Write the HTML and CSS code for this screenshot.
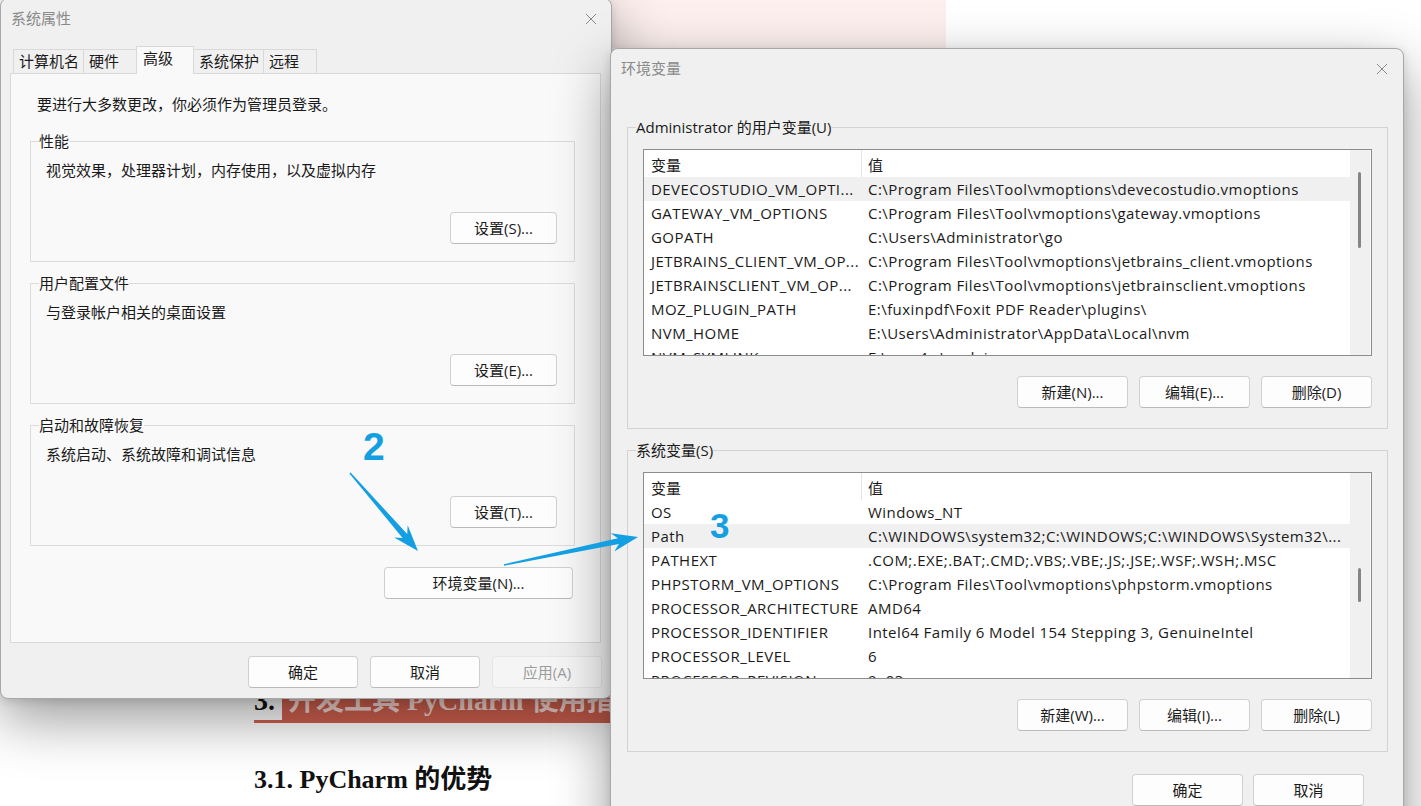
FILE: index.html
```html
<!DOCTYPE html>
<html lang="zh-CN">
<head>
    <meta charset="UTF-8">
    <meta name="viewport" content="width=device-width, initial-scale=1.0">
    <title>环境变量</title>
    <link rel="stylesheet" href="styles.css">
</head>
<body>
<div class="desk">

    <!-- page behind the dialogs -->
    <div class="doc">
        <div class="doc-band"></div>
        <h2 class="doc-h2"><span class="num">3.</span><span class="ttl">开发工具 PyCharm 使用指南</span></h2>
        <h3 class="doc-h3">3.1. PyCharm 的优势</h3>
    </div>

    <!-- 系统属性 dialog -->
    <div class="win sysprops">
        <div class="titlebar">
            <span class="wtitle">系统属性</span>
            <svg class="close" width="12" height="12" viewBox="0 0 12 12"><path d="M1 1L11 11M11 1L1 11"/></svg>
        </div>
        <div class="tabs">
            <span class="tab">计算机名</span>
            <span class="tab">硬件</span>
            <span class="tab on">高级</span>
            <span class="tab">系统保护</span>
            <span class="tab">远程</span>
        </div>
        <div class="panel">
            <p class="note">要进行大多数更改，你必须作为管理员登录。</p>
            <fieldset class="grp">
                <legend>性能</legend>
                <p>视觉效果，处理器计划，内存使用，以及虚拟内存</p>
                <div class="grp-btns"><button class="btn">设置(S)...</button></div>
            </fieldset>
            <fieldset class="grp">
                <legend>用户配置文件</legend>
                <p>与登录帐户相关的桌面设置</p>
                <div class="grp-btns"><button class="btn">设置(E)...</button></div>
            </fieldset>
            <fieldset class="grp">
                <legend>启动和故障恢复</legend>
                <p>系统启动、系统故障和调试信息</p>
                <div class="grp-btns"><button class="btn">设置(T)...</button></div>
            </fieldset>
            <div class="env-row"><button class="btn wide">环境变量(N)...</button></div>
        </div>
        <div class="foot">
            <button class="btn">确定</button>
            <button class="btn">取消</button>
            <button class="btn" disabled>应用(A)</button>
        </div>
    </div>

    <!-- 环境变量 dialog -->
    <div class="win envvars">
        <div class="titlebar">
            <span class="wtitle">环境变量</span>
            <svg class="close" width="12" height="12" viewBox="0 0 12 12"><path d="M1 1L11 11M11 1L1 11"/></svg>
        </div>

        <fieldset class="grp envgrp">
            <legend>Administrator 的用户变量(U)</legend>
            <div class="lv">
                <div class="lv-main">
                    <div class="lv-head"><span class="c1">变量</span><span class="c2">值</span></div>
                    <div class="row sel"><span class="c1">DEVECOSTUDIO_VM_OPTI...</span><span class="c2">C:\Program Files\Tool\vmoptions\devecostudio.vmoptions</span></div>
                    <div class="row"><span class="c1">GATEWAY_VM_OPTIONS</span><span class="c2">C:\Program Files\Tool\vmoptions\gateway.vmoptions</span></div>
                    <div class="row"><span class="c1">GOPATH</span><span class="c2">C:\Users\Administrator\go</span></div>
                    <div class="row"><span class="c1">JETBRAINS_CLIENT_VM_OP...</span><span class="c2">C:\Program Files\Tool\vmoptions\jetbrains_client.vmoptions</span></div>
                    <div class="row"><span class="c1">JETBRAINSCLIENT_VM_OP...</span><span class="c2">C:\Program Files\Tool\vmoptions\jetbrainsclient.vmoptions</span></div>
                    <div class="row"><span class="c1">MOZ_PLUGIN_PATH</span><span class="c2">E:\fuxinpdf\Foxit PDF Reader\plugins\</span></div>
                    <div class="row"><span class="c1">NVM_HOME</span><span class="c2">E:\Users\Administrator\AppData\Local\nvm</span></div>
                    <div class="row"><span class="c1">NVM_SYMLINK</span><span class="c2">E:\nvm4w\nodejs</span></div>
                </div>
                <div class="lv-scroll"><span class="thumb user"></span></div>
            </div>
            <div class="grp-btns">
                <button class="btn">新建(N)...</button>
                <button class="btn">编辑(E)...</button>
                <button class="btn">删除(D)</button>
            </div>
        </fieldset>

        <fieldset class="grp envgrp">
            <legend>系统变量(S)</legend>
            <div class="lv">
                <div class="lv-main">
                    <div class="lv-head"><span class="c1">变量</span><span class="c2">值</span></div>
                    <div class="row"><span class="c1">OS</span><span class="c2">Windows_NT</span></div>
                    <div class="row sel"><span class="c1">Path</span><span class="c2">C:\WINDOWS\system32;C:\WINDOWS;C:\WINDOWS\System32\...</span></div>
                    <div class="row"><span class="c1">PATHEXT</span><span class="c2">.COM;.EXE;.BAT;.CMD;.VBS;.VBE;.JS;.JSE;.WSF;.WSH;.MSC</span></div>
                    <div class="row"><span class="c1">PHPSTORM_VM_OPTIONS</span><span class="c2">C:\Program Files\Tool\vmoptions\phpstorm.vmoptions</span></div>
                    <div class="row"><span class="c1">PROCESSOR_ARCHITECTURE</span><span class="c2">AMD64</span></div>
                    <div class="row"><span class="c1">PROCESSOR_IDENTIFIER</span><span class="c2">Intel64 Family 6 Model 154 Stepping 3, GenuineIntel</span></div>
                    <div class="row"><span class="c1">PROCESSOR_LEVEL</span><span class="c2">6</span></div>
                    <div class="row"><span class="c1">PROCESSOR_REVISION</span><span class="c2">9a03</span></div>
                </div>
                <div class="lv-scroll"><span class="thumb sys"></span></div>
            </div>
            <div class="grp-btns">
                <button class="btn">新建(W)...</button>
                <button class="btn">编辑(I)...</button>
                <button class="btn">删除(L)</button>
            </div>
        </fieldset>

        <div class="foot">
            <button class="btn">确定</button>
            <button class="btn">取消</button>
        </div>
    </div>

    <!-- step markers drawn on top -->
    <svg class="marks" width="1421" height="806" viewBox="0 0 1421 806">
        <polygon points="349.4,473.4 402.6,538 394.1,537.6 418,551 407.7,525.2 407.2,534 350.6,472.6"/>
        <polygon points="504.2,565.7 618.9,544 614.3,551.4 638,537 610.7,533.2 617.9,538.2 503.8,564.3"/>
        <text x="363" y="460" class="step">2</text>
        <text x="710" y="538" class="step small">3</text>
    </svg>
</div>
</body>
</html>
```

FILE: styles.css
```css
* {
    box-sizing: border-box;
}
html, body {
    margin: 0;
    height: 100%;
    overflow: hidden;
}
body {
    background: #fff;
    font-family: "Open Sans", "Noto Sans CJK SC", sans-serif;
    font-size: 15px;
    color: #1a1a1a;
}
.desk {
    position: relative;
    width: 1421px;
    height: 806px;
    overflow: hidden;
}

/* document underneath */
.doc {
    padding-left: 254px;
}
.doc-band {
    margin-left: 346px;
    width: 346px;
    height: 48px;
    background: #fcefee;
}
.doc-h2 {
    display: flex;
    width: max-content;
    margin: 634px 0 0;
    font: bold 28px/38px "Liberation Serif", "Noto Sans CJK SC", serif;
    border-bottom: 3px solid #d0604f;
}
.doc-h2 .num {
    color: #111;
    padding-right: 7px;
}
.doc-h2 .ttl {
    background: #d0604f;
    color: #f8d9d3;
    padding: 0 6px;
    white-space: nowrap;
}
.doc-h3 {
    margin: 41px 0 0;
    font: bold 26px/32px "Liberation Serif", "Noto Sans CJK SC", serif;
    color: #111;
}

/* dialog windows */
.win {
    position: absolute;
    background: #f0f0f0;
    border: 1px solid #a8a8a8;
    border-radius: 8px;
    box-shadow: 0 20px 56px rgba(0, 0, 0, 0.4), 0 2px 10px rgba(0, 0, 0, 0.12);
}
.sysprops {
    left: 0;
    top: -2px;
    width: 612px;
    z-index: 1;
}
.envvars {
    left: 610px;
    top: 48px;
    width: 794px;
    height: 800px;
    z-index: 2;
}
.titlebar {
    display: flex;
    justify-content: space-between;
    align-items: flex-start;
    height: 30px;
    padding: 9px 14px 0 10px;
}
.wtitle {
    line-height: 20px;
    color: #8a8a8a;
}
.close {
    margin-top: 5px;
    fill: none;
    stroke: #8a8a8a;
    stroke-width: 1;
}
.envvars .titlebar {
    padding-right: 15px;
}

/* tabs */
.tabs {
    display: flex;
    align-items: flex-end;
    height: 28px;
    margin: 17px 0 -1px 12px;
    position: relative;
    z-index: 1;
}
.tab {
    height: 25px;
    min-width: 54px;
    padding: 0 4px 0 5px;
    margin-right: -1px;
    border: 1px solid #d9d9d9;
    background: #f0f0f0;
    line-height: 23px;
    white-space: nowrap;
}
.tab.on {
    height: 28px;
    min-width: 58px;
    padding-left: 6px;
    border-bottom: none;
    background: #f9f9f9;
    line-height: 22px;
    position: relative;
    z-index: 2;
}

/* 高级 page */
.panel {
    margin: 0 10px 0 9px;
    height: 570px;
    background: #f9f9f9;
    border: 1px solid #d9d9d9;
    padding: 20px 25px 0 19px;
}
.note {
    margin: 0;
    padding-left: 7px;
    line-height: 20px;
}
.grp {
    margin: 11px 0 0;
    padding: 9px 17px 17px 15px;
    border: 1px solid #dcdcdc;
    min-width: 0;
}
.note + .grp {
    margin-top: 17px;
}
.grp legend {
    margin-left: -7px;
    padding: 0;
    line-height: 20px;
}
.grp p {
    margin: 0;
    line-height: 20px;
}
.grp-btns {
    display: flex;
    justify-content: flex-end;
    gap: 11px;
    margin-top: 32px;
}
.env-row {
    display: flex;
    justify-content: flex-end;
    margin: 21px 2px 0 0;
}

/* buttons */
.btn {
    width: 107px;
    height: 32px;
    padding: 0;
    border: 1px solid #d0d0d0;
    border-bottom-color: #bababa;
    border-radius: 4px;
    background: #fdfdfd;
    font: 15px/30px "Open Sans", "Noto Sans CJK SC", sans-serif;
    color: #1b1b1b;
}
.btn.wide {
    width: 189px;
}
.btn:disabled {
    background: #f5f5f5;
    border-color: #e5e5e5;
    color: #9d9d9d;
}
.foot {
    display: flex;
    justify-content: flex-end;
    gap: 12px;
    padding: 13px 9px 10px 0;
}
.sysprops .foot .btn {
    width: 110px;
}

/* 环境变量 groups */
.envgrp {
    margin: 11px 15px 0 16px;
    padding: 12px 15px 20px 15px;
    border-color: #d3d3d3;
}
.titlebar + .envgrp {
    margin-top: 38px;
}
.envgrp .grp-btns {
    margin-top: 20px;
}
.envgrp .btn,
.envvars .foot .btn {
    width: 111px;
}
.envvars .foot {
    gap: 10px;
    padding: 22px 39px 0 0;
}

/* list views */
.lv {
    display: flex;
    height: 207px;
    border: 1px solid #8c8c8c;
    background: #fff;
    overflow: hidden;
}
.lv-main {
    flex: 1;
    min-width: 0;
    overflow: hidden;
}
.lv-head,
.row {
    display: flex;
    white-space: nowrap;
}
.lv-head {
    height: 27px;
}
.lv-head span {
    padding-top: 3px;
    line-height: 24px;
}
.row {
    height: 24px;
    line-height: 24px;
    letter-spacing: 0.45px;
}
.row.sel {
    background: #f0f0f0;
}
.c1 {
    flex: none;
    width: 218px;
    padding-left: 7px;
    overflow: hidden;
}
.lv-head .c1 {
    border-right: 1px solid #e5e5e5;
}
.c2 {
    padding-left: 6px;
}
.lv-scroll {
    flex: none;
    width: 21px;
    background: #f0f0f0;
    border-right: 1px solid #fafafa;
}
.thumb {
    display: block;
    width: 3px;
    margin-left: 8px;
    border-radius: 2px;
    background: #858585;
}
.thumb.user {
    margin-top: 22px;
    height: 76px;
}
.thumb.sys {
    margin-top: 95px;
    height: 34px;
}

/* step markers */
.marks {
    position: absolute;
    left: 0;
    top: 0;
    z-index: 3;
    pointer-events: none;
    fill: #139fe2;
}
.step {
    font: bold 39px "Liberation Sans", sans-serif;
}
.step.small {
    font-size: 35px;
}
```
